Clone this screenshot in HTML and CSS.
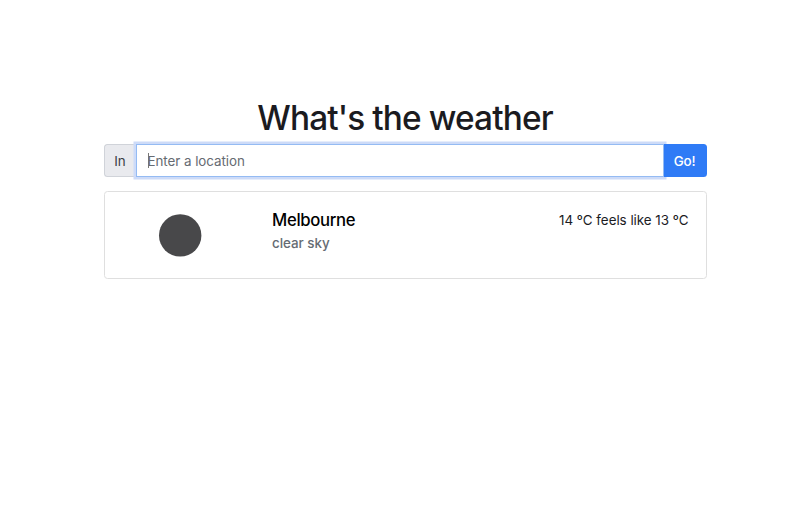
FILE: index.html
```html
<!DOCTYPE html>
<html lang="en">
<head>
<meta charset="utf-8">
<title>What's the weather</title>
<link rel="stylesheet" href="styles.css">
</head>
<body>
<main class="container">
  <h1 class="title">What's the weather</h1>
  <form class="search">
    <span class="prefix">In</span>
    <div class="field"><span class="caret"></span><span class="placeholder">Enter a location</span></div>
    <button class="go" type="button">Go!</button>
  </form>
  <section class="card">
    <div class="icon"><svg width="44" height="44" viewBox="0 0 44 44"><circle cx="22.2" cy="22.4" r="21.2" fill="#48484a"/></svg></div>
    <div class="place">
      <h2 class="city">Melbourne</h2>
      <p class="sky">clear sky</p>
    </div>
    <p class="temp">14 ºC feels like 13 ºC</p>
  </section>
</main>
</body>
</html>
```

FILE: styles.css
```css
* { box-sizing: border-box; }
body { margin: 0; background: #fff; color: #1b1b1f; font-family: Inter, "Liberation Sans", sans-serif; font-size: 13.4px; }
h1, h2, p { margin: 0; }
.container { width: 603px; margin-left: 103.5px; padding-top: 97px; }
.title { height: 40px; margin-bottom: 7px; text-align: center; font-size: 33.4px; line-height: 43px; font-weight: 500; letter-spacing: -0.88px; white-space: nowrap; }
.search { display: flex; height: 33px; }
.prefix { width: 32px; display: flex; align-items: center; justify-content: center; background: #e9eaee; border: 1px solid #d0d3d9; border-right: 0; border-radius: 3.5px 0 0 3.5px; color: #3c4046; }
.field { flex: 1; display: flex; align-items: center; padding-left: 11px; border: 1px solid #94bbf3; box-shadow: 0 0 0 2.5px #cddbf8; background: #fff; color: #666b72; z-index: 1; letter-spacing: -0.06px; }
.caret { width: 1px; height: 15px; margin-right: -1px; background: #777; }
.go { width: 43px; padding: 0 1px 0 0; border: 0; border-radius: 0 3.5px 3.5px 0; background: #2f7bf6; color: #fff; font: inherit; font-weight: 500; letter-spacing: -0.2px; z-index: 2; }
.card { display: flex; height: 88px; margin-top: 14px; border: 1px solid #dfdfdf; border-radius: 3.5px; }
.icon { width: 151px; padding-top: 21.3px; text-align: center; }
.place { flex: 1; padding: 17px 0 0 16.5px; }
.city { color: #000; font-size: 16.7px; line-height: 22px; font-weight: 500; letter-spacing: -0.32px; }
.sky { margin-top: 4px; line-height: 16px; font-weight: 500; color: #656b73; letter-spacing: -0.03px; }
.temp { padding: 17.5px 17px 0 0; line-height: 20px; letter-spacing: -0.03px; }
```
